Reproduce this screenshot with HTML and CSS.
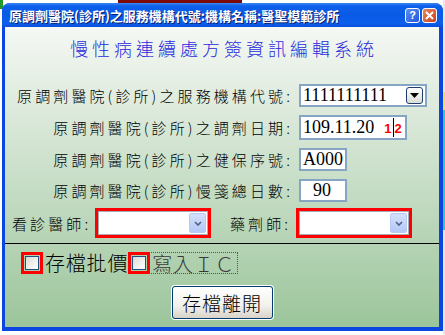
FILE: index.html
```html
<!DOCTYPE html>
<html lang="zh-Hant">
<head>
    <meta charset="UTF-8">
    <meta name="viewport" content="width=device-width, initial-scale=1.0">
    <title>慢性病連續處方簽資訊編輯系統</title>
    <link rel="stylesheet" href="styles.css">
</head>
<body>

<div class="desktop">
    <div class="bg-strip bg-red"></div>
    <div class="bg-strip bg-green"></div>
    <div class="bg-strip bg-right"></div>
</div>

<div class="window">
    <div class="titlebar">
        <span class="title-text">原調劑醫院(診所)之服務機構代號:機構名稱:醫聖模範診所</span>
        <div class="title-buttons">
            <span class="tb-btn tb-help">?</span>
            <span class="tb-btn tb-close">
                <svg width="9" height="9" viewBox="0 0 9 9"><path d="M1 1L8 8M8 1L1 8" stroke="#fff" stroke-width="2"/></svg>
            </span>
        </div>
    </div>

    <div class="client">
        <h1 class="heading">慢性病連續處方簽資訊編輯系統</h1>

        <div class="form-grid">
            <label class="label">原調劑醫院(診所)之服務機構代號:</label>
            <div class="field field-code">
                <span>1111111111</span>
                <span class="drop-btn">
                    <svg width="9" height="5" viewBox="0 0 9 5"><path d="M0 0H9L4.5 5Z" fill="#000"/></svg>
                </span>
            </div>

            <label class="label">原調劑醫院(診所)之調劑日期:</label>
            <div class="field field-date">
                <span>109.11.20</span>
                <span class="ime"><b>1</b><i class="caret"></i><b>2</b></span>
            </div>

            <label class="label">原調劑醫院(診所)之健保序號:</label>
            <div class="field field-small">A000</div>

            <label class="label">原調劑醫院(診所)慢箋總日數:</label>
            <div class="field field-small field-days">90</div>
        </div>

        <div class="staff-row">
            <label class="label staff-doc">看診醫師:</label>
            <div class="combo">
                <div class="combo-inner">
                    <span class="combo-btn">
                        <svg width="8" height="5" viewBox="0 0 8 5"><path d="M1 1L4 4L7 1" stroke="#4d6185" stroke-width="1.6" fill="none"/></svg>
                    </span>
                </div>
            </div>
            <label class="label staff-pharm">藥劑師:</label>
            <div class="combo">
                <div class="combo-inner">
                    <span class="combo-btn">
                        <svg width="8" height="5" viewBox="0 0 8 5"><path d="M1 1L4 4L7 1" stroke="#4d6185" stroke-width="1.6" fill="none"/></svg>
                    </span>
                </div>
            </div>
        </div>

        <div class="divider"></div>

        <div class="check-row">
            <span class="check-frame"><span class="checkbox"></span></span>
            <span class="check-text">存檔批價</span>
            <span class="check-frame check-second"><span class="checkbox"></span></span>
            <span class="check-text check-focus">寫入ＩＣ</span>
        </div>

        <div class="actions">
            <button class="save-btn">存檔離開</button>
        </div>
    </div>
</div>

</body>
</html>
```

FILE: styles.css
```css
body {
    margin: 0;
    background: #fff;
    font-family: "Noto Sans CJK TC", "Liberation Sans", sans-serif;
    color: #000;
}
.desktop {
    position: absolute;
    left: 0;
    top: 0;
    width: 445px;
    height: 335px;
    overflow: hidden;
}
.bg-strip {
    position: absolute;
}
.bg-red {
    left: 118px;
    top: 0;
    width: 124px;
    height: 6px;
    background: #7c0a0a;
}
.bg-green {
    left: 0;
    top: 0;
    width: 3px;
    height: 9px;
    background: #1f9a2a;
}
.bg-right {
    left: 443px;
    top: 0;
    width: 2px;
    height: 335px;
    background: linear-gradient(#e8e8e8 0, #e8e8e8 92px, #f4e23a 92px, #f4e23a 110px, #2ec8c8 110px, #2ec8c8 230px, #e6e6e6 230px);
}

.window {
    position: relative;
    margin: 3px 0 0 2px;
    width: 441px;
    height: 328px;
    background: #0a46df;
    border-radius: 8px 8px 0 0;
    display: flex;
    flex-direction: column;
}
.titlebar {
    height: 24px;
    display: flex;
    align-items: center;
    justify-content: space-between;
    padding: 0 6px 0 7px;
    border-radius: 8px 8px 0 0;
    background: linear-gradient(#3d87f4 0, #0d60ea 3px, #0a5ae6 50%, #0c5fec 85%, #0a4fd8 100%);
}
.title-text {
    color: #fff;
    font-size: 13px;
    font-weight: bold;
    text-shadow: 1px 1px #0a1f6e;
    white-space: nowrap;
}
.title-buttons {
    display: flex;
    gap: 2px;
}
.tb-btn {
    width: 13px;
    height: 13px;
    border: 1px solid #fff;
    border-radius: 3px;
    display: flex;
    align-items: center;
    justify-content: center;
    color: #fff;
    font-family: "Liberation Sans", sans-serif;
    font-size: 11px;
    font-weight: bold;
}
.tb-help {
    background: linear-gradient(135deg, #5a8ef5, #2357d8);
}
.tb-close {
    background: linear-gradient(135deg, #e9865f, #c9401c);
}

.client {
    margin: 0 4px 0 3px;
    height: 300px;
    background: linear-gradient(#f5f8f4, #9cc59b);
    display: flex;
    flex-direction: column;
}
.heading {
    margin: 10px 0 0;
    padding-left: 4px;
    text-align: center;
    font-size: 18px;
    line-height: 22px;
    font-weight: 300;
    letter-spacing: 4px;
    color: #2b2bdc;
}

.form-grid {
    margin-top: 25px;
    display: grid;
    grid-template-columns: 288px auto;
    column-gap: 6px;
    row-gap: 8px;
    align-items: center;
}
.label {
    font-size: 15px;
    font-weight: 300;
    letter-spacing: 3.1px;
    text-align: right;
    white-space: nowrap;
}
.field {
    box-sizing: border-box;
    height: 23px;
    border: 2px solid #86a4c4;
    background: #fff;
    display: flex;
    align-items: center;
    padding-left: 2px;
    font-family: "Liberation Serif", serif;
    font-size: 18px;
    letter-spacing: 0;
}
.field-code {
    width: 128px;
    justify-content: space-between;
    padding-right: 2px;
}
.drop-btn {
    width: 15px;
    height: 15px;
    border: 1px solid #1c3f6e;
    border-radius: 3px;
    background: linear-gradient(#ffffff, #dcdcd6);
    display: flex;
    align-items: center;
    justify-content: center;
}
.field-date {
    width: 108px;
    height: 25px;
}
.ime {
    display: flex;
    align-items: center;
    margin-left: 10px;
    font-family: "Liberation Sans", sans-serif;
    font-size: 13px;
    color: #ff0000;
}
.ime b {
    margin-top: 2px;
}
.caret {
    width: 1px;
    height: 19px;
    margin: 0 1px;
    background: #000;
}
.field-small {
    width: 48px;
}
.field-days {
    padding-left: 12px;
}

.staff-row {
    margin-top: 6px;
    display: flex;
    align-items: center;
    padding-left: 7px;
}
.staff-doc {
    width: 83px;
    text-align: left;
}
.staff-pharm {
    width: 66px;
    margin-left: 19px;
    text-align: left;
}
.combo {
    box-sizing: border-box;
    width: 116px;
    height: 30px;
    border: 3px solid #ff0000;
}
.combo-inner {
    box-sizing: border-box;
    height: 100%;
    border: 1px solid #a5acb5;
    background: #fff;
    display: flex;
    justify-content: flex-end;
    padding: 1px;
}
.combo-btn {
    width: 15px;
    border: 1px solid #b6c9f5;
    border-radius: 2px;
    background: linear-gradient(#d4e0fb, #b4c8f6);
    display: flex;
    align-items: center;
    justify-content: center;
}

.divider {
    margin-top: 5px;
    height: 1px;
    background: #000;
}

.check-row {
    margin-top: 8px;
    display: flex;
    align-items: center;
    padding-left: 16px;
}
.check-frame {
    box-sizing: border-box;
    width: 22px;
    height: 22px;
    border: 3px solid #ff0000;
    display: flex;
    align-items: center;
    justify-content: center;
}
.checkbox {
    box-sizing: border-box;
    width: 14px;
    height: 14px;
    border: 1px solid #1c5180;
    background: linear-gradient(135deg, #dcdcd7, #ffffff);
}
.check-text {
    margin-left: 2px;
    font-size: 20px;
    font-weight: 300;
    line-height: 22px;
    letter-spacing: 0.8px;
}
.check-second {
    margin-left: 0;
}
.check-focus {
    margin-left: -1px;
    box-sizing: border-box;
    height: 22px;
    padding: 0 2px;
    border: 1px dotted #1d6c74;
    color: #3a3a3a;
}

.actions {
    margin-top: 12px;
    display: flex;
    justify-content: center;
}
.save-btn {
    width: 101px;
    height: 33px;
    border: 1px solid #003c74;
    border-radius: 3px;
    box-shadow: 0 0 0 1px #fff;
    background: linear-gradient(#ffffff, #f2f1ec 60%, #d9d3c8);
    font-family: "Noto Sans CJK TC", sans-serif;
    font-size: 19px;
    font-weight: 300;
    letter-spacing: 1px;
    padding: 0;
    color: #000;
}
```
